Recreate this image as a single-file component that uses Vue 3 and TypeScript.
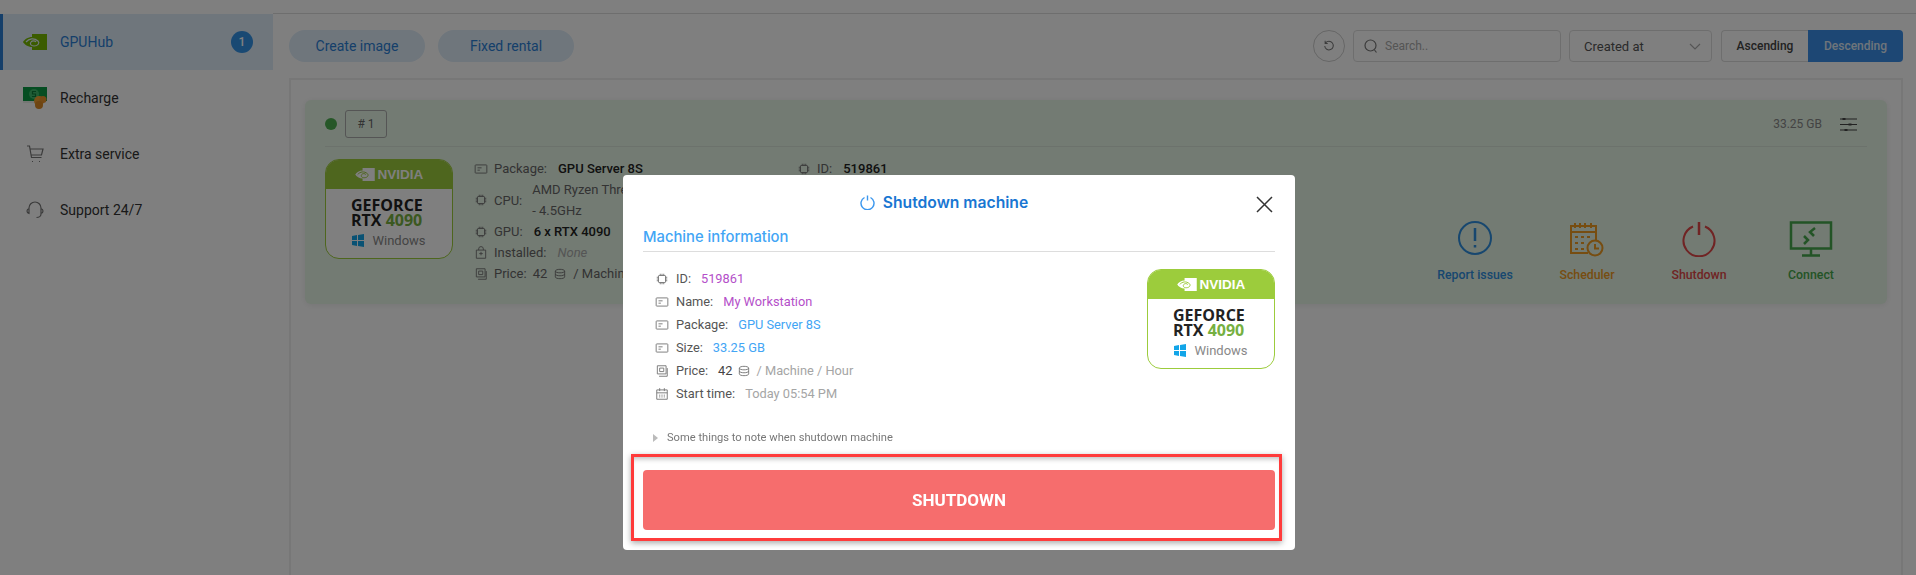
<script setup lang="ts">
const icons: Record<string, string> = {
  chip: 'M7 6h10a1 1 0 0 1 1 1v10a1 1 0 0 1-1 1H7a1 1 0 0 1-1-1V7a1 1 0 0 1 1-1zM9 3v3M12 3v3M15 3v3M9 18v3M12 18v3M15 18v3M3 9h3M3 12h3M3 15h3M18 9h3M18 12h3M18 15h3',
  card: 'M3 5h18a1 1 0 0 1 1 1v12a1 1 0 0 1-1 1H3a1 1 0 0 1-1-1V6a1 1 0 0 1 1-1zM6 10h7M6 14h4',
  box: 'M4 7h16v14H4zM8 7V5a4 4 0 0 1 8 0v2M12 10v6M9 13h6',
  price: 'M4 3h15v14H4zM8 7h7v6H8zM7 21h14V7',
  calendar: 'M3 5h18v16H3zM3 10h18M8 2v5M16 2v5M7 14h2M11 14h2M15 14h2M7 17h2M11 17h2M15 17h2',
  coins: 'M4 7c0-4 16-4 16 0v10c0 4-16 4-16 0zM4 7c0 4 16 4 16 0M4 12c0 4 16 4 16 0'
}

const menu = [
  { label: 'GPUHub', icon: 'nvidia', active: true },
  { label: 'Recharge', icon: 'money' },
  { label: 'Extra service', icon: 'cart' },
  { label: 'Support 24/7', icon: 'support' }
]

const actions = [
  { label: 'Report issues', cls: 'blue', icon: 'report' },
  { label: 'Scheduler', cls: 'orange', icon: 'scheduler' },
  { label: 'Shutdown', cls: 'red', icon: 'power' },
  { label: 'Connect', cls: 'green', icon: 'connect' }
]

const machineInfo = [
  { icon: 'chip', label: 'ID:', value: '519861', cls: 'purple' },
  { icon: 'card', label: 'Name:', value: 'My Workstation', cls: 'purple' },
  { icon: 'card', label: 'Package:', value: 'GPU Server 8S', cls: 'sky' },
  { icon: 'card', label: 'Size:', value: '33.25 GB', cls: 'sky' }
]
</script>

<template>
  <div class="page">
    <aside class="sidebar">
      <div v-for="item in menu" :key="item.label" class="menu-item" :class="{ active: item.active }">
        <span class="menu-icon">
          <svg v-if="item.icon === 'nvidia'" width="24" height="16" viewBox="0 0 24 16">
            <path fill="#76b900" d="M9 0H24V16H9V13C5 13 1.5 10.500 0 8C1.500 5.500 5 3 9 3Z" />
            <path fill="none" stroke="#e3f0fb" stroke-width="1.200" d="M3 8C6 4.500 11 3.500 15 7C17 9 15 12 11 12C8 12 6.500 10 8 8C9 6.500 12 6.500 13 8" />
          </svg>
          <svg v-else-if="item.icon === 'money'" width="24" height="22" viewBox="0 0 24 22">
            <path fill="#0c9a45" d="M0 0h24v14H0z" />
            <circle cx="11" cy="7" r="5" fill="#3fbb6c" />
            <path fill="none" stroke="#0c7a38" stroke-width="1.200" d="M13 4.500H9.500v2.500h3v2.500H9" />
            <path fill="#e9efe9" d="M0 14h17v2H0z" />
            <circle cx="16" cy="14" r="5" fill="#f0a030" />
            <circle cx="20" cy="12.500" r="3.500" fill="#e8922a" />
            <circle cx="16" cy="18" r="4" fill="#dc8a24" />
          </svg>
          <svg v-else-if="item.icon === 'cart'" class="line-icon" width="18" height="18" viewBox="0 0 18 18">
            <path d="M1 1h2.500l2 11.500h10M4.500 4H17l-1.500 6H5.500" />
            <path d="M6 16.500h1M13 16.500h1" />
          </svg>
          <svg v-else class="line-icon" width="18" height="18" viewBox="0 0 18 18">
            <path d="M3 9V7a6 6 0 0 1 12 0v2M3 7.500C1.500 8 1 9 1 10s.5 2 2 2.500zM15 7.500c1.500.5 2 1.500 2 2.500s-.5 2-2 2.500zM15 13c0 2-2 3.500-4.500 3.500" />
          </svg>
        </span>
        <span class="menu-label">{{ item.label }}</span>
        <span v-if="item.active" class="menu-count">1</span>
      </div>
    </aside>

    <main class="main">
      <div class="toolbar">
        <button class="pill">Create image</button>
        <button class="pill">Fixed rental</button>
        <div class="spacer"></div>
        <button class="refresh">
          <svg class="line-icon" width="12" height="12" viewBox="0 0 14 14">
            <path d="M3 3.500A5 5 0 1 1 2 7M2.500 1v3h3" />
          </svg>
        </button>
        <div class="search">
          <svg class="line-icon" width="14" height="15" viewBox="0 0 14 15">
            <circle cx="6.500" cy="6.500" r="5.500" />
            <path d="M10.500 11l2 2.500" />
          </svg>
          <span>Search..</span>
        </div>
        <div class="select">
          <span>Created at</span>
          <svg class="line-icon light" width="12" height="7" viewBox="0 0 12 7"><path d="M1 1l5 5 5-5" /></svg>
        </div>
        <div class="sort">
          <span class="sort-btn">Ascending</span>
          <span class="sort-btn on">Descending</span>
        </div>
      </div>

      <section class="panel">
        <div class="machine">
          <div class="machine-head">
            <span class="dot"></span>
            <span class="tag"># 1</span>
            <span class="spacer"></span>
            <span class="size">33.25 GB</span>
            <svg class="line-icon dark" width="17" height="17" viewBox="0 0 17 17">
              <path d="M0 3h17M0 8.500h17M0 14h17" />
              <path stroke-width="3" d="M4 2v2M10 7.500v2M6 13v2" />
            </svg>
          </div>
          <div class="machine-body">
            <div class="gpu-badge">
              <div class="gpu-top">
                <svg width="24" height="16" viewBox="0 0 24 16">
                  <path fill="#fff" d="M9 0H24V16H9V13C5 13 1.500 10.500 0 8C1.500 5.500 5 3 9 3Z" />
                  <path fill="none" stroke="#9ccc3c" stroke-width="1.200" d="M3 8C6 4.500 11 3.500 15 7C17 9 15 12 11 12C8 12 6.500 10 8 8C9 6.500 12 6.500 13 8" />
                </svg>
                <span>NVIDIA</span>
              </div>
              <div class="gpu-name">GEFORCE<br />RTX <em>4090</em></div>
              <div class="gpu-os">
                <svg width="12" height="13" viewBox="0 0 12 13"><path fill="#12a5e8" d="M0 2l5-1v5H0zM6 1l6-1v6H6zM0 7h5v5l-5-1zM6 7h6v6l-6-1z" /></svg>
                <span>Windows</span>
              </div>
            </div>
            <div class="specs">
              <div class="spec"><svg class="spec-icon" viewBox="0 0 24 24"><path :d="icons.card" /></svg><span>Package:</span><b>GPU Server 8S</b></div>
              <div class="spec"><svg class="spec-icon" viewBox="0 0 24 24"><path :d="icons.chip" /></svg><span>CPU:</span><span class="cpu">AMD Ryzen Threadripper<br />- 4.5GHz</span></div>
              <div class="spec"><svg class="spec-icon" viewBox="0 0 24 24"><path :d="icons.chip" /></svg><span>GPU:</span><b>6 x RTX 4090</b></div>
              <div class="spec"><svg class="spec-icon" viewBox="0 0 24 24"><path :d="icons.box" /></svg><span>Installed:</span><i>None</i></div>
              <div class="spec"><svg class="spec-icon" viewBox="0 0 24 24"><path :d="icons.price" /></svg><span>Price:</span><span>42</span><svg class="spec-icon" viewBox="0 0 24 24"><path :d="icons.coins" /></svg><span>/ Machine / Hour</span></div>
            </div>
            <div class="specs second">
              <div class="spec"><svg class="spec-icon" viewBox="0 0 24 24"><path :d="icons.chip" /></svg><span>ID:</span><b>519861</b></div>
            </div>
            <div class="actions">
              <div v-for="a in actions" :key="a.label" class="action" :class="a.cls">
                <svg width="46" height="36" viewBox="0 0 46 36" fill="none" stroke="currentColor">
                  <g v-if="a.icon === 'report'" stroke-width="2">
                    <circle cx="23" cy="17" r="16" />
                    <path stroke-width="2.500" d="M23 7v13M23 24v2.500" />
                  </g>
                  <g v-else-if="a.icon === 'scheduler'" stroke-width="2">
                    <path d="M32 19V5H7v27h17M7 11h25M11 2v5M16 2v5M21 2v5M27 2v5" />
                    <path stroke-dasharray="3 3" d="M11 16h15M11 22h11M11 28h9" />
                    <circle cx="31" cy="27" r="7.500" />
                    <path d="M31 23v4.500h4" />
                  </g>
                  <g v-else-if="a.icon === 'power'" stroke-width="2">
                    <path d="M17 5.500a15.500 15.500 0 1 0 12 0" />
                    <path stroke-width="2.500" d="M23 1v13" />
                  </g>
                  <g v-else stroke-width="2.500">
                    <path d="M3 1.500h40v26H3zM23 27.500V34M14 34.500h18" />
                    <path d="M27 7l-5 4 4 4M16 15l4 4-4 4" />
                  </g>
                </svg>
                <span>{{ a.label }}</span>
              </div>
            </div>
          </div>
        </div>
      </section>
    </main>

    <div class="overlay">
      <div class="modal">
        <header class="modal-head">
          <svg class="power" width="15" height="15" viewBox="0 0 15 15">
            <path d="M4.500 2.500a6.500 6.500 0 1 0 6 0M7.500 .5v5" />
          </svg>
          <h2>Shutdown machine</h2>
          <svg class="close" width="17" height="17" viewBox="0 0 17 17">
            <path d="M1 1l15 15M16 1L1 16" />
          </svg>
        </header>

        <div class="modal-body">
          <h3>Machine information</h3>
          <div class="info-wrap">
            <ul class="info">
              <li v-for="row in machineInfo" :key="row.label">
                <svg class="spec-icon" viewBox="0 0 24 24"><path :d="icons[row.icon]" /></svg>
                <span>{{ row.label }}</span>
                <span :class="row.cls">{{ row.value }}</span>
              </li>
              <li>
                <svg class="spec-icon" viewBox="0 0 24 24"><path :d="icons.price" /></svg>
                <span>Price:</span>
                <span class="near">42</span>
                <svg class="spec-icon coin" viewBox="0 0 24 24"><path :d="icons.coins" /></svg>
                <span class="muted tight">/ Machine / Hour</span>
              </li>
              <li>
                <svg class="spec-icon" viewBox="0 0 24 24"><path :d="icons.calendar" /></svg>
                <span>Start time:</span>
                <span class="muted">Today 05:54 PM</span>
              </li>
            </ul>
            <div class="gpu-badge">
              <div class="gpu-top">
                <svg width="24" height="16" viewBox="0 0 24 16">
                  <path fill="#fff" d="M9 0H24V16H9V13C5 13 1.500 10.500 0 8C1.500 5.500 5 3 9 3Z" />
                  <path fill="none" stroke="#9ccc3c" stroke-width="1.200" d="M3 8C6 4.500 11 3.500 15 7C17 9 15 12 11 12C8 12 6.500 10 8 8C9 6.500 12 6.500 13 8" />
                </svg>
                <span>NVIDIA</span>
              </div>
              <div class="gpu-name">GEFORCE<br />RTX <em>4090</em></div>
              <div class="gpu-os">
                <svg width="12" height="13" viewBox="0 0 12 13"><path fill="#12a5e8" d="M0 2l5-1v5H0zM6 1l6-1v6H6zM0 7h5v5l-5-1zM6 7h6v6l-6-1z" /></svg>
                <span>Windows</span>
              </div>
            </div>
          </div>
          <div class="note">
            <span class="caret"></span>
            <span>Some things to note when shutdown machine</span>
          </div>
        </div>

        <div class="highlight">
          <button class="shutdown">SHUTDOWN</button>
        </div>
      </div>
    </div>
  </div>
</template>

<style scoped>
.page {
  display: flex;
  height: 575px;
  overflow: hidden;
  background: #fff;
  font-family: Roboto, "Liberation Sans", sans-serif;
  font-size: 13px;
  color: #333;
}

.sidebar {
  width: 273px;
  flex: none;
  padding-top: 14px;
}

.menu-item {
  display: flex;
  align-items: center;
  height: 56px;
  padding-left: 23px;
  font-size: 14px;
  color: #333;
}

.menu-item.active {
  background: #deecf9;
  border-left: 3px solid #2a7fd5;
  padding-left: 20px;
  color: #2a7fd5;
  padding-right: 20px;
}

.menu-icon {
  width: 24px;
  margin-right: 13px;
  display: flex;
  justify-content: center;
}

.menu-label {
  flex: 1;
}

.menu-count {
  width: 22px;
  height: 22px;
  border-radius: 50%;
  background: #3392e6;
  color: #fff;
  font-size: 12px;
  font-weight: 500;
  text-align: center;
  line-height: 22px;
}

.line-icon {
  fill: none;
  stroke: #777;
  stroke-width: 1.2;
}

.line-icon.dark {
  stroke: #444;
}

.line-icon.light {
  stroke: #aaa;
}

.main {
  flex: 1;
  margin-top: 13px;
  padding: 16px 13px 0 16px;
  border-top: 1px solid #ddd;
  min-width: 0;
}

.toolbar {
  display: flex;
  align-items: center;
  height: 32px;
}

.spacer {
  flex: 1;
}

.pill {
  width: 136px;
  height: 32px;
  margin-right: 13px;
  border: 0;
  border-radius: 16px;
  background: #deecf9;
  color: #2a7fd5;
  font: inherit;
  font-size: 14px;
}

.refresh {
  width: 32px;
  height: 32px;
  margin-right: 8px;
  padding: 0;
  border: 1px solid #ccc;
  border-radius: 50%;
  background: #fff;
  display: flex;
  align-items: center;
  justify-content: center;
}

.search,
.select {
  height: 32px;
  box-sizing: border-box;
  display: flex;
  align-items: center;
  border: 1px solid #ddd;
  border-radius: 4px;
}

.search {
  width: 208px;
  margin-right: 8px;
  padding-left: 10px;
  gap: 7px;
  color: #aaa;
  font-size: 12px;
}

.select {
  width: 143px;
  margin-right: 9px;
  padding: 0 10px 0 14px;
  justify-content: space-between;
  color: #555;
}

.sort {
  display: flex;
  height: 32px;
  font-size: 12px;
  font-weight: 500;
}

.sort-btn {
  width: 87px;
  box-sizing: border-box;
  border: 1px solid #ddd;
  border-right: 0;
  border-radius: 4px 0 0 4px;
  text-align: center;
  line-height: 30px;
  color: #444;
}

.sort-btn.on {
  width: 95px;
  border: 0;
  border-radius: 0 4px 4px 0;
  background: #3b8ee8;
  color: #dfeaf5;
  line-height: 32px;
}

.panel {
  margin-top: 16px;
  height: 520px;
  box-sizing: border-box;
  padding: 20px 14px;
  border: 2px solid #efefef;
}

.machine {
  height: 204px;
  box-sizing: border-box;
  padding: 10px 20px 0;
  border-radius: 6px;
  background: #e6f6e6;
  box-shadow: 0 1px 6px rgba(0, 0, 0, 0.08);
}

.machine-head {
  display: flex;
  align-items: center;
  height: 28px;
  border-bottom: 1px solid #d9e4d9;
  padding-bottom: 8px;
  box-sizing: content-box;
}

.dot {
  width: 12px;
  height: 12px;
  border-radius: 50%;
  background: #4caf50;
  margin-right: 8px;
}

.tag {
  width: 42px;
  height: 28px;
  box-sizing: border-box;
  border: 1px solid #aaa;
  border-radius: 3px;
  text-align: center;
  line-height: 26px;
  color: #666;
  font-size: 12px;
}

.size {
  color: #888;
  font-size: 12px;
  margin-right: 18px;
}

.machine-head svg {
  margin-right: 10px;
}

.machine-body {
  display: flex;
  padding-top: 12px;
}

.gpu-badge {
  width: 128px;
  height: 100px;
  box-sizing: border-box;
  border: 1px solid #9ccc3c;
  border-radius: 14px;
  background: #fff;
  overflow: hidden;
  flex: none;
  text-align: center;
}

.gpu-top {
  height: 29px;
  background: #9ccc3c;
  color: #fff;
  display: flex;
  align-items: center;
  justify-content: center;
  gap: 3px;
  font-family: "Liberation Sans", sans-serif;
  font-weight: 700;
  font-size: 13.500px;
}

.gpu-top svg {
  width: 20px;
  height: 13px;
}

.gpu-name {
  width: 76px;
  margin: 9px auto 0;
  text-align: left;
  font-family: "Open Sans", sans-serif;
  font-weight: 700;
  font-size: 16px;
  line-height: 15px;
  color: #222;
  white-space: nowrap;
}

.gpu-name em {
  font-style: normal;
  color: #76b041;
}

.gpu-os {
  display: flex;
  align-items: center;
  justify-content: center;
  gap: 8px;
  margin-top: 5px;
  font-size: 13px;
  color: #888;
}

.specs {
  margin-left: 21px;
  margin-top: -1px;
  width: 323px;
  flex: none;
}

.specs.second {
  margin-left: 0;
  width: auto;
}

.spec {
  display: flex;
  align-items: center;
  gap: 6px;
  min-height: 21px;
  color: #666;
  font-size: 13px;
}

.spec b {
  font-weight: 500;
  color: #222;
  margin-left: 5px;
}

.spec i {
  color: #aaa;
  margin-left: 5px;
}

.cpu {
  line-height: 21px;
  margin-left: 4px;
}

.spec-icon {
  width: 14px;
  height: 14px;
  flex: none;
  fill: none;
  stroke: #777;
  stroke-width: 1.600;
}

.actions {
  margin-left: auto;
  display: flex;
  padding-top: 62px;
}

.action {
  width: 112px;
  display: flex;
  flex-direction: column;
  align-items: center;
  gap: 11px;
  font-size: 12.300px;
  font-weight: 500;
}

.action svg {
  height: 36px;
}

.action.blue { color: #2f8fdf; }
.action.orange { color: #ee9a22; }
.action.red { color: #e04848; }
.action.green { color: #46a84c; }

.overlay {
  position: fixed;
  inset: 0;
  background: rgba(0, 0, 0, 0.5);
  display: flex;
  justify-content: center;
  align-items: flex-start;
  padding-top: 175px;
  padding-left: 2px;
}

.modal {
  width: 672px;
  height: 375px;
  background: #fff;
  border-radius: 4px;
  display: flex;
  flex-direction: column;
}

.modal-head {
  position: relative;
  display: flex;
  align-items: center;
  justify-content: center;
  height: 50px;
  padding: 2px 30px 0 0;
  gap: 8px;
}

.modal-head h2 {
  margin: 0;
  font-family: Inter, "Liberation Sans", sans-serif;
  font-size: 15.700px;
  font-weight: 600;
  color: #1976d2;
}

.power {
  fill: none;
  stroke: #3b97ee;
  stroke-width: 1.400;
}

.close {
  position: absolute;
  top: 21px;
  right: 22px;
  fill: none;
  stroke: #333;
  stroke-width: 1.500;
}

.modal-body {
  flex: 1;
  padding: 0 20px;
}

.modal-body h3 {
  margin: 0;
  height: 24px;
  border-bottom: 1px solid #ddd;
  font-family: Inter, "Liberation Sans", sans-serif;
  font-size: 14.800px;
  font-weight: 500;
  line-height: 20px;
  color: #42a5f5;
}

.info-wrap {
  display: flex;
  justify-content: space-between;
  padding-top: 17px;
}

.info {
  list-style: none;
  margin: -2px 0 0;
  padding: 0 0 0 12px;
}

.info li {
  display: flex;
  align-items: center;
  gap: 7px;
  height: 23px;
  font-size: 12.800px;
  color: #555;
}

.info li > span:nth-child(3) {
  margin-left: 3px;
}

.purple { color: #b44fc9; }
.sky { color: #42a5f5; }
.muted { color: #a5a5a5; }
.near { color: #444; }
.coin { margin-left: -3px; }
.tight { margin-left: -1px; }

.note {
  display: flex;
  align-items: center;
  gap: 9px;
  margin-top: 26px;
  padding-left: 10px;
  font-size: 11.150px;
  color: #777;
}

.caret {
  width: 0;
  height: 0;
  border-left: 5px solid #bbb;
  border-top: 4px solid transparent;
  border-bottom: 4px solid transparent;
}

.highlight {
  margin: 0 13px 9px 8px;
  padding: 13px 4px 8px 9px;
  border: 3px solid #ff3b3b;
  box-shadow: 0 2px 6px rgba(0, 0, 0, 0.35), inset 0 5px 5px -3px rgba(0, 0, 0, 0.25);
}

.shutdown {
  display: block;
  width: 100%;
  height: 60px;
  border: 0;
  border-radius: 4px;
  background: #f66d6d;
  color: #fff;
  font: inherit;
  font-size: 17px;
  font-weight: 700;
}
</style>
